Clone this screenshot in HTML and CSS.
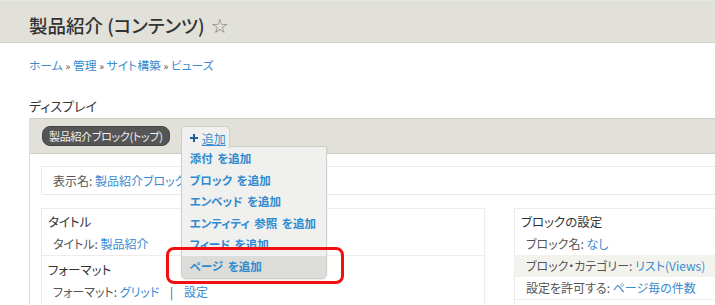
FILE: index.html
```html
<!DOCTYPE html>
<html lang="ja">
<head>
    <meta charset="UTF-8">
    <meta name="viewport" content="width=device-width, initial-scale=1.0">
    <title>製品紹介 (コンテンツ)</title>
    <link rel="stylesheet" href="styles.css">
</head>
<body>
    <header class="page-header">
        <h1 class="page-title">製品紹介 (コンテンツ) <span class="star">☆</span></h1>
    </header>

    <div class="page">
        <nav class="breadcrumb">
            <a href="#">ホーム</a> <span class="sep">»</span> <a href="#">管理</a> <span class="sep">»</span> <a href="#">サイト構築</a> <span class="sep">»</span> <a href="#">ビューズ</a>
        </nav>

        <h2 class="section-title">ディスプレイ</h2>

        <div class="display">
            <div class="display-tabs">
                <span class="tab-current">製品紹介ブロック(トップ)</span>
                <div class="add-menu">
                    <span class="tab-add">
                        <svg class="plus" width="8" height="8" viewBox="0 0 8 8"><rect x="3" y="0" width="2" height="8"/><rect x="0" y="3" width="8" height="2"/></svg>
                        <a href="#">追加</a>
                    </span>
                    <ul class="add-list">
                        <li><a href="#">添付 を追加</a></li>
                        <li><a href="#">ブロック を追加</a></li>
                        <li><a href="#">エンベッド を追加</a></li>
                        <li><a href="#">エンティティ 参照 を追加</a></li>
                        <li><a href="#">フィード を追加</a></li>
                        <li class="active"><a href="#">ページ を追加</a></li>
                    </ul>
                    <div class="callout"></div>
                </div>
            </div>

            <div class="display-body">
                <div class="display-name">表示名: <a href="#">製品紹介ブロック(トップ)</a></div>

                <div class="columns">
                    <div class="column">
                        <div class="group">
                            <h3>タイトル</h3>
                            <div class="row">タイトル: <a href="#">製品紹介</a></div>
                        </div>
                        <div class="group">
                            <h3>フォーマット</h3>
                            <div class="row">フォーマット: <a href="#">グリッド</a> <span class="pipe">|</span> <a href="#">設定</a></div>
                        </div>
                    </div>
                    <div class="column">
                        <div class="group">
                            <h3>ブロックの設定</h3>
                            <div class="row">ブロック名: <a href="#">なし</a></div>
                            <div class="row odd">ブロック・カテゴリー: <a href="#">リスト(Views)</a></div>
                            <div class="row">設定を許可する: <a href="#">ページ毎の件数</a></div>
                            <div class="row last">アクセス: <a href="#">権限</a></div>
                        </div>
                    </div>
                </div>
            </div>
        </div>
    </div>
</body>
</html>
```

FILE: styles.css
```css
body {
    margin: 0;
    font-family: "Noto Sans CJK JP", "Liberation Sans", sans-serif;
    font-feature-settings: "palt";
    font-size: 12px;
    color: #333;
    background: #fff;
    overflow: hidden;
}

a {
    color: #3a8bcf;
    text-decoration: none;
}

.page-header {
    background: #e1e1da;
    border-top: 1px solid #e8e8e2;
    border-bottom: 1px solid #d6d6ce;
    height: 41px;
    padding-left: 29px;
}

.page-title {
    margin: 0;
    font-size: 18.5px;
    font-weight: 500;
    line-height: 48px;
    color: #333;
}

.star {
    font-family: "DejaVu Sans", sans-serif;
    font-size: 20px;
    color: #7a7a72;
    font-weight: normal;
    margin-left: 2px;
}

.page {
    padding-left: 29px;
}

.breadcrumb {
    margin-top: 13px;
    line-height: 18px;
    font-size: 11.8px;
}

.breadcrumb .sep {
    color: #555;
    font-size: 10px;
}

.section-title {
    margin: 22px 0 3px;
    font-size: 13px;
    font-weight: normal;
    line-height: 18px;
}

.display {
    width: 820px;
    border-left: 1px solid #ddd;
}

.display-tabs {
    background: #e1e1da;
    border-top: 1px solid #cdcdc6;
    border-bottom: 1px solid #cdcdc6;
    box-sizing: border-box;
    height: 36px;
    padding: 7px 0 0 12px;
    display: flex;
    align-items: flex-start;
    gap: 11px;
}

.tab-current {
    background: #555;
    color: #f2f2f2;
    border: 1px solid #444;
    border-radius: 8px;
    height: 18px;
    line-height: 18px;
    padding: 0 6px;
    font-size: 11px;
    letter-spacing: -0.3px;
}

.add-menu {
    position: relative;
}

.tab-add {
    position: relative;
    z-index: 2;
    display: flex;
    align-items: center;
    gap: 4px;
    background: #f0f0ee;
    border: 1px solid #cfcfca;
    border-bottom: none;
    border-radius: 5px 5px 0 0;
    height: 22px;
    padding: 0 3px 0 8px;
    font-size: 12px;
}

.tab-add a {
    text-decoration: underline;
}

.plus {
    fill: #1f5c9b;
}

.add-list {
    position: absolute;
    z-index: 1;
    top: 20px;
    left: 0;
    width: 144px;
    margin: 0;
    padding: 0;
    list-style: none;
    background: #f0f0ee;
    border: 1px solid #cfcfca;
    border-radius: 0 0 5px 5px;
    box-shadow: 0 1px 2px rgba(0, 0, 0, 0.1);
    overflow: hidden;
}

.add-list li {
    line-height: 21.6px;
    padding-left: 8px;
    font-weight: bold;
    font-size: 11.5px;
    word-spacing: 2px;
}

.add-list li:first-child {
    padding-top: 1px;
}

.add-list li a {
    color: #2f8ad0;
}

.add-list li.active {
    background: #dcdcd8;
}

.callout {
    position: absolute;
    z-index: 3;
    left: -15px;
    top: 121px;
    width: 172px;
    height: 31px;
    border: 3.5px solid #f01010;
    border-radius: 8px;
}

.display-body {
    padding: 12px 0 0 11px;
}

.display-name {
    border: 1px solid #e9e9e9;
    height: 27px;
    line-height: 27px;
    padding-left: 11px;
    color: #555;
}

.columns {
    display: grid;
    grid-template-columns: 444px 1fr;
    gap: 29px;
    margin-top: 13px;
}

.column {
    border: 1px solid #ececec;
}

.group {
    padding-top: 2px;
}

.group + .group {
    border-top: 1px solid #ececec;
    padding-top: 3px;
}

.group h3 {
    margin: 0;
    padding-left: 6px;
    font-size: 12.5px;
    font-weight: normal;
    line-height: 22px;
    color: #333;
}

.row {
    padding-left: 11px;
    line-height: 22px;
    color: #555;
}

.row.odd {
    background: #f3f3ee;
}

.row.last {
    border-top: 1px solid #ececec;
}

.pipe {
    color: #555;
    margin: 0 8px;
}
```
